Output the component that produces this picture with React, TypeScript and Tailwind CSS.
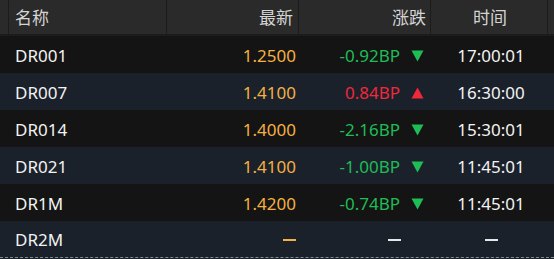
import React from "react";

type Row = { name: string; price: string; chg: string; dir: "up" | "down" | "none"; time: string };

const rows: Row[] = [
  { name: "DR001", price: "1.2500", chg: "-0.92BP", dir: "down", time: "17:00:01" },
  { name: "DR007", price: "1.4100", chg: "0.84BP", dir: "up", time: "16:30:00" },
  { name: "DR014", price: "1.4000", chg: "-2.16BP", dir: "down", time: "15:30:01" },
  { name: "DR021", price: "1.4100", chg: "-1.00BP", dir: "down", time: "11:45:01" },
  { name: "DR1M", price: "1.4200", chg: "-0.74BP", dir: "down", time: "11:45:01" },
  { name: "DR2M", price: "", chg: "", dir: "none", time: "" },
];

function Tri({ up }: { up: boolean }) {
  return (
    <svg width="13" height="12" viewBox="0 0 13 12" className="ml-[11px]">
      {up ? (
        <polygon points="6.5,0.5 12.5,11.5 0.5,11.5" fill="#f0283a" />
      ) : (
        <polygon points="0.5,0.5 12.5,0.5 6.5,11.5" fill="#1fbd55" />
      )}
    </svg>
  );
}

function Dash({ color }: { color: string }) {
  return <span className={`inline-block w-[13px] h-[2px] ${color}`} />;
}

export default function App() {
  const font = { fontFamily: '"Noto Sans", "Noto Sans CJK SC", sans-serif' };
  return (
    <div className="w-[554px] h-[259px] bg-[#1b212b] overflow-hidden text-[17px]" style={font}>
      <div className="grid grid-cols-[9px_158px_132px_132px_117px_6px] h-[36px] bg-[#2a2a2a] border-b-[2px] border-[#1c1c1c] text-[#d4d4d4]">
        <div className="border-r border-[#1c1c1c]" />
        <div className="flex items-center pt-[2px] pl-[6px] border-r border-[#1c1c1c]">名称</div>
        <div className="flex items-center pt-[2px] justify-end pr-[5px] border-r border-[#1c1c1c]">最新</div>
        <div className="flex items-center pt-[2px] justify-end pr-[4px] border-r border-[#1c1c1c]">涨跌</div>
        <div className="flex items-center pt-[2px] justify-center pl-[2px] border-r border-[#1c1c1c]">时间</div>
        <div />
      </div>
      {rows.map((r, i) => (
        <div
          key={r.name}
          className={`grid grid-cols-[167px_132px_132px_117px_6px] ${i === 5 ? "h-[36px]" : "h-[37px]"} items-center pt-[2px] ${
            i % 2 === 0 ? "bg-[#141414]" : "bg-[#1b212b]"
          }`}
        >
          <div className="pl-[15px] text-[#f2f2f2]">{r.name}</div>
          <div className="flex justify-end pr-[3px] text-[#f5b041]">
            {r.price ? r.price : <Dash color="bg-[#f5b041]" />}
          </div>
          <div className="flex items-center justify-end pr-[7px]">
            {r.dir === "none" ? (
              <span className="mr-[23px] flex items-center"><Dash color="bg-[#e6e6e6]" /></span>
            ) : (
              <>
                <span className={r.dir === "up" ? "text-[#f0283a]" : "text-[#1fbd55]"}>{r.chg}</span>
                <Tri up={r.dir === "up"} />
              </>
            )}
          </div>
          <div className="flex justify-center pl-[3px] text-[#f2f2f2]">
            {r.time ? r.time : <Dash color="bg-[#e6e6e6]" />}
          </div>
          <div />
        </div>
      ))}
      <div className="h-[1px] border-t border-dashed border-[#888]" />
    </div>
  );
}
